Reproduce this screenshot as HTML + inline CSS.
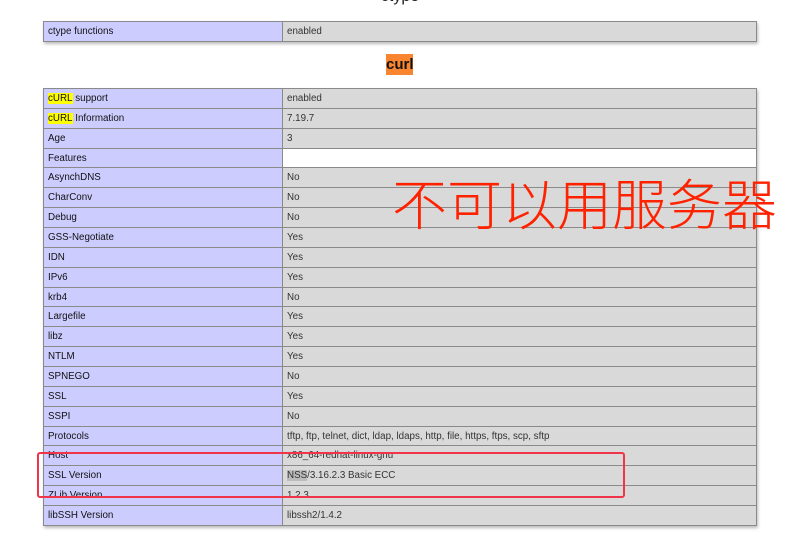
<!DOCTYPE html>
<html><head><meta charset="utf-8"><style>
body{margin:0;width:800px;height:543px;background:#fff;position:relative;overflow:hidden;font-family:"Liberation Sans","Noto Sans CJK SC",sans-serif;}
.t{position:absolute;left:43px;width:714px;box-shadow:1px 2px 3px #bbb;font-size:9.8px;border-top:1px solid #8a8a8a;}
.r{display:flex;height:19.86px;box-sizing:border-box;border-bottom:1px solid #8a8a8a;}
.r div{display:flex;align-items:center;padding-left:4px;box-sizing:border-box;border-left:1px solid #8a8a8a}
.e{background:#ccccff;width:239px;color:#111}
.v{background:#d9d9d9;color:#333;flex:1;border-right:1px solid #8a8a8a}
.w{background:#fff!important}
.y{background:#ffff00}
</style></head><body>
<div style="position:absolute;left:0;width:800px;text-align:center;top:-12px;font-size:16px;color:#222">ctype</div>
<div class="t" style="top:21px"><div class="r" style="height:20px"><div class="e">ctype functions</div><div class="v">enabled</div></div></div>
<div style="position:absolute;left:386px;top:54px;width:27px;height:21px;background:#f98531;font-size:15px;font-weight:bold;text-align:center;line-height:21px;color:#111">curl</div>
<div class="t" style="top:88px">
<div class="r"><div class="e"><span class="y">cURL</span>&nbsp;support</div><div class="v">enabled</div></div>
<div class="r"><div class="e"><span class="y">cURL</span>&nbsp;Information</div><div class="v">7.19.7</div></div>
<div class="r"><div class="e">Age</div><div class="v">3</div></div>
<div class="r"><div class="e">Features</div><div class="v w"></div></div>
<div class="r"><div class="e">AsynchDNS</div><div class="v">No</div></div>
<div class="r"><div class="e">CharConv</div><div class="v">No</div></div>
<div class="r"><div class="e">Debug</div><div class="v">No</div></div>
<div class="r"><div class="e">GSS-Negotiate</div><div class="v">Yes</div></div>
<div class="r"><div class="e">IDN</div><div class="v">Yes</div></div>
<div class="r"><div class="e">IPv6</div><div class="v">Yes</div></div>
<div class="r"><div class="e">krb4</div><div class="v">No</div></div>
<div class="r"><div class="e">Largefile</div><div class="v">Yes</div></div>
<div class="r"><div class="e">libz</div><div class="v">Yes</div></div>
<div class="r"><div class="e">NTLM</div><div class="v">Yes</div></div>
<div class="r"><div class="e">SPNEGO</div><div class="v">No</div></div>
<div class="r"><div class="e">SSL</div><div class="v">Yes</div></div>
<div class="r"><div class="e">SSPI</div><div class="v">No</div></div>
<div class="r"><div class="e">Protocols</div><div class="v">tftp, ftp, telnet, dict, ldap, ldaps, http, file, https, ftps, scp, sftp</div></div>
<div class="r"><div class="e">Host</div><div class="v">x86_64-redhat-linux-gnu</div></div>
<div class="r"><div class="e">SSL Version</div><div class="v"><span style="background:#bbb">NSS</span>/3.16.2.3 Basic ECC</div></div>
<div class="r"><div class="e">ZLib Version</div><div class="v">1.2.3</div></div>
<div class="r"><div class="e">libSSH Version</div><div class="v">libssh2/1.4.2</div></div>
</div>
<div style="position:absolute;left:392px;top:168px;font-size:55px;line-height:66px;color:#ff2200;font-weight:300;font-family:'Noto Sans CJK SC',sans-serif;white-space:nowrap">不可以用服务器</div>
<div style="position:absolute;left:37px;top:452px;width:584px;height:42px;border:2px solid #f0344a;border-radius:3px"></div>
</body></html>
